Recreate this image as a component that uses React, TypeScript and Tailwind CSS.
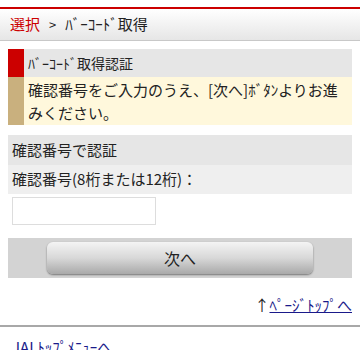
export default function App() {
  return (
    <div
      className="min-h-screen bg-white text-[#222] overflow-hidden"
      style={{ fontFamily: '"Noto Sans CJK JP", "Noto Sans", sans-serif' }}
    >
      {/* top bar */}
      <div className="h-[7px] bg-white" />
      <div className="h-[2px] bg-[#c00]" />
      <div className="h-[32px] flex items-center pl-[10px] bg-gradient-to-b from-white to-[#e6e6e6] border-b border-[#c8c8c8] text-[15px]">
        <span className="text-[#c00]">選択</span>
        <span className="mx-[9px] text-[13px]">&gt;</span>
        <span>ﾊﾞｰｺｰﾄﾞ取得</span>
      </div>

      <div className="px-[8px] pt-[8px]">
        {/* notice box */}
        <div className="flex flex-col">
          <div className="flex h-[28px]">
            <div className="w-[16px] bg-[#c00]" />
            <div className="flex-1 bg-[#e6e6e6] flex items-center pl-[4px] text-[14px]">
              ﾊﾞｰｺｰﾄﾞ取得認証
            </div>
          </div>
          <div className="flex">
            <div className="w-[16px] bg-[#c9b07e]" />
            <div className="flex-1 bg-[#fff8dc] pl-[4px] pr-[2px] py-[1px] text-[15px] leading-[23px]">
              確認番号をご入力のうえ、[次へ]ﾎﾞﾀﾝよりお進みください。
            </div>
          </div>
        </div>

        {/* form */}
        <div className="mt-[10px] h-[30px] bg-[#e6e6e6] flex items-center pl-[4px] text-[15px]">
          確認番号で認証
        </div>
        <div className="h-[29px] bg-[#efefef] flex items-center pl-[4px] text-[15px]">
          確認番号(8桁または12桁)：
        </div>
        <div className="pt-[3px] pl-[4px]">
          <input
            type="text"
            className="block w-[144px] h-[28px] border border-[#ddd] bg-white outline-none"
          />
        </div>

        <div className="mt-[13px] h-[40px] bg-[#d3d3d3] flex items-center justify-center">
          <button className="w-[266px] h-[32px] rounded-[6px] bg-gradient-to-b from-[#f4f4f4] via-[#d8d8d8] to-[#a9a9a9] shadow-[0_1px_2px_rgba(0,0,0,0.45)] text-[16px] text-[#222]">
            次へ
          </button>
        </div>

        <div className="mt-[17px] text-right text-[15px] leading-[20px]">
          ↑<a href="#" className="text-[#1a1a8a] underline">ﾍﾟｰｼﾞﾄｯﾌﾟへ</a>
        </div>
      </div>

      <div className="mt-[10px] h-[2px] bg-[#a8a8a8]" />
      <div className="pl-[12px] pt-[10px] text-[15px] leading-[20px]">
        <a href="#" className="text-[#1a1a8a]">JALﾄｯﾌﾟﾒﾆｭｰへ</a>
      </div>
    </div>
  );
}
